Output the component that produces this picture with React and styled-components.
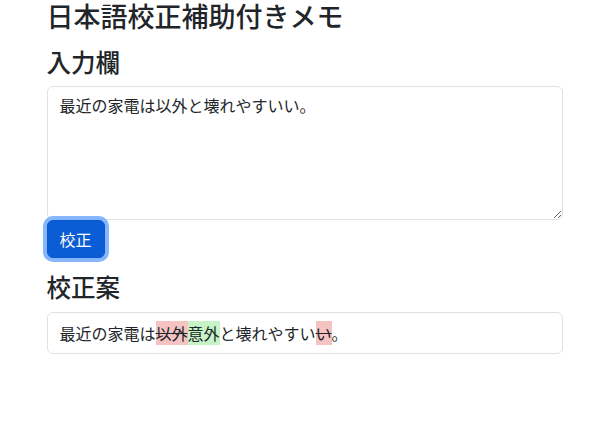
import React, { useState } from 'react'
import styled, { createGlobalStyle } from 'styled-components'

const GlobalStyle = createGlobalStyle`
	* {
		box-sizing: border-box;
	}
	body {
		margin: 0;
		background: #fff;
		color: #212529;
		font-family: 'Noto Sans CJK JP', 'Noto Sans', sans-serif;
		font-size: 16px;
		line-height: 1.5;
	}
`

const Container = styled.div`
	max-width: 540px;
	margin: 0 auto;
	padding: 0 12px;
`

const Title = styled.h2`
	font-size: 27px;
	font-weight: 500;
	line-height: 32px;
	margin: 0 0 15px;
`

const SectionTitle = styled.h3`
	font-size: 24.5px;
	font-weight: 500;
	line-height: 1.2;
	margin: ${(p) => (p.$spaced ? '14px' : '0')} 0 10px;
`

const TextArea = styled.textarea`
	display: block;
	width: 100%;
	height: 134px;
	padding: 6px 12px;
	font: inherit;
	color: #212529;
	border: 1px solid #dee2e6;
	border-radius: 6px;
	resize: vertical;
	outline: none;
`

const Button = styled.button`
	display: block;
	height: 38px;
	padding: 6px 12px;
	font: inherit;
	color: #fff;
	background: #0a5dd4;
	border: 1px solid #0a58ca;
	border-radius: 6px;
	box-shadow: 0 0 0 4px #86b7fe;
	cursor: pointer;
`

const Result = styled.div`
	padding: 8px 12px;
	border: 1px solid #dee2e6;
	border-radius: 6px;
	line-height: 24px;
`

const Del = styled.span`
	background: #f5c3c1;
	text-decoration: line-through;
`

const Ins = styled.span`
	background: #c7f4c7;
`

export default function App() {
	const [text, setText] = useState('最近の家電は以外と壊れやすいい。')

	return (
		<Container>
			<GlobalStyle />
			<Title>日本語校正補助付きメモ</Title>
			<SectionTitle>入力欄</SectionTitle>
			<TextArea value={text} onChange={(e) => setText(e.target.value)} />
			<Button>校正</Button>
			<SectionTitle $spaced>校正案</SectionTitle>
			<Result>
				最近の家電は<Del>以外</Del>
				<Ins>意外</Ins>と壊れやすい<Del>い</Del>。
			</Result>
		</Container>
	)
}
